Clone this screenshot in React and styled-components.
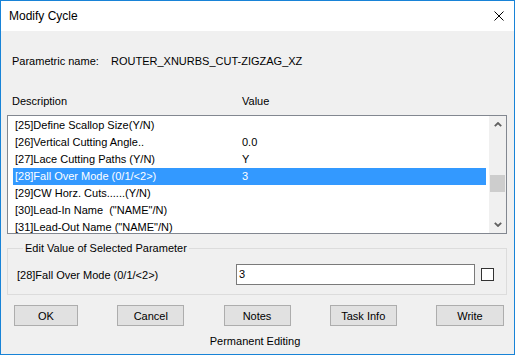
import React from "react";
import styled, { createGlobalStyle } from "styled-components";

const GlobalStyle = createGlobalStyle`
  html, body {
    margin: 0;
    padding: 0;
    background: #ffffff;
  }
  * {
    box-sizing: border-box;
  }
`;

const Window = styled.div`
  width: 515px;
  height: 355px;
  border: 1px solid #1883d7;
  background: #f0f0f0;
  font-family: "Liberation Sans", Arial, sans-serif;
  font-size: 11px;
  color: #000;
  display: flex;
  flex-direction: column;
  overflow: hidden;
`;

const TitleBar = styled.div`
  height: 30px;
  flex: none;
  background: #ffffff;
  display: flex;
  align-items: center;
  justify-content: space-between;
  padding: 0 10px 0 8px;
  font-size: 12px;
`;

const CloseIcon = () => (
  <svg width="10" height="10" viewBox="0 0 10 10">
    <path d="M0.5 0.5 L9.5 9.5 M9.5 0.5 L0.5 9.5" stroke="#000" strokeWidth="1" fill="none" />
  </svg>
);

const Body = styled.div`
  display: flex;
  flex-direction: column;
  padding: 0 7px 0 6px;
`;

const NameRow = styled.div`
  display: flex;
  margin-top: 23px;
  padding-left: 5px;
  line-height: 14px;
`;

const NameLabel = styled.span`
  width: 99px;
`;

const HeaderRow = styled.div`
  display: grid;
  grid-template-columns: 230px 1fr;
  margin-top: 26px;
  padding-left: 5px;
  line-height: 14px;
`;

const ListBox = styled.div`
  margin-top: 7px;
  height: 119px;
  border: 1px solid #828790;
  background: #ffffff;
  display: flex;
`;

const Rows = styled.div`
  flex: 1;
  padding: 1px 3px 0 5px;
  overflow: hidden;
`;

const Row = styled.div`
  display: grid;
  grid-template-columns: 227px 1fr;
  height: 17px;
  line-height: 17px;
  padding-left: 2px;
  white-space: pre;
  background: ${({ $selected }) => ($selected ? "#3399ff" : "transparent")};
  color: ${({ $selected }) => ($selected ? "#ffffff" : "#000000")};
`;

const ScrollBar = styled.div`
  width: 17px;
  flex: none;
  background: #f0f0f0;
  display: flex;
  flex-direction: column;
  align-items: center;
`;

const ArrowButton = styled.div`
  height: 17px;
  width: 17px;
  display: flex;
  align-items: center;
  justify-content: center;
`;

const Track = styled.div`
  flex: 1;
  width: 15px;
  padding-top: 42px;
`;

const Thumb = styled.div`
  height: 17px;
  background: #cdcdcd;
`;

const Chevron = ({ down }) => (
  <svg width="8" height="5" viewBox="0 0 8 5">
    <path
      d={down ? "M0.8 0.8 L4 4 L7.2 0.8" : "M0.8 4.2 L4 1 L7.2 4.2"}
      stroke="#606060"
      strokeWidth="1.8"
      fill="none"
    />
  </svg>
);

const Group = styled.fieldset`
  margin: 7px 0 0 0;
  border: 1px solid #dcdcdc;
  padding: 9px 12px 9px 9px;
  display: grid;
  grid-template-columns: 213px 239px 13px;
  column-gap: 6px;
  align-items: center;
`;

const Legend = styled.legend`
  margin-left: 6px;
  padding: 0 2px;
  line-height: 14px;
`;

const EditInput = styled.div`
  height: 21px;
  border: 1px solid #7a7a7a;
  background: #ffffff;
  padding-left: 2px;
  line-height: 19px;
`;

const CheckBox = styled.div`
  width: 13px;
  height: 13px;
  border: 1px solid #333333;
  background: #ffffff;
`;

const ButtonRow = styled.div`
  display: flex;
  justify-content: space-between;
  margin-top: 10px;
  padding: 0 3px 0 7px;
`;

const Button = styled.div`
  width: ${({ $w }) => $w}px;
  height: 21px;
  background: #e1e1e1;
  border: 1px solid #adadad;
  display: flex;
  align-items: center;
  justify-content: center;
`;

const Footer = styled.div`
  margin-top: 8px;
  text-align: center;
  line-height: 14px;
  padding-right: 4px;
`;

const rows = [
  ["[25]Define Scallop Size(Y/N)", ""],
  ["[26]Vertical Cutting Angle..", "0.0"],
  ["[27]Lace Cutting Paths (Y/N)", "Y"],
  ["[28]Fall Over Mode (0/1/<2>)", "3"],
  ["[29]CW Horz. Cuts......(Y/N)", ""],
  ["[30]Lead-In Name  (\"NAME\"/N)", ""],
  ["[31]Lead-Out Name (\"NAME\"/N)", ""],
];

const buttons = [
  ["OK", 64],
  ["Cancel", 67],
  ["Notes", 67],
  ["Task Info", 67],
  ["Write", 68],
];

export default function App() {
  return (
    <>
      <GlobalStyle />
      <Window>
        <TitleBar>
          <span>Modify Cycle</span>
          <CloseIcon />
        </TitleBar>
        <Body>
          <NameRow>
            <NameLabel>Parametric name:</NameLabel>
            <span>ROUTER_XNURBS_CUT-ZIGZAG_XZ</span>
          </NameRow>
          <HeaderRow>
            <span>Description</span>
            <span>Value</span>
          </HeaderRow>
          <ListBox>
            <Rows>
              {rows.map(([desc, val], i) => (
                <Row key={i} $selected={i === 3}>
                  <span>{desc}</span>
                  <span>{val}</span>
                </Row>
              ))}
            </Rows>
            <ScrollBar>
              <ArrowButton>
                <Chevron />
              </ArrowButton>
              <Track>
                <Thumb />
              </Track>
              <ArrowButton>
                <Chevron down />
              </ArrowButton>
            </ScrollBar>
          </ListBox>
          <Group>
            <Legend>Edit Value of Selected Parameter</Legend>
            <span>[28]Fall Over Mode (0/1/&lt;2&gt;)</span>
            <EditInput>3</EditInput>
            <CheckBox />
          </Group>
          <ButtonRow>
            {buttons.map(([label, w]) => (
              <Button key={label} $w={w}>
                {label}
              </Button>
            ))}
          </ButtonRow>
          <Footer>Permanent Editing</Footer>
        </Body>
      </Window>
    </>
  );
}
